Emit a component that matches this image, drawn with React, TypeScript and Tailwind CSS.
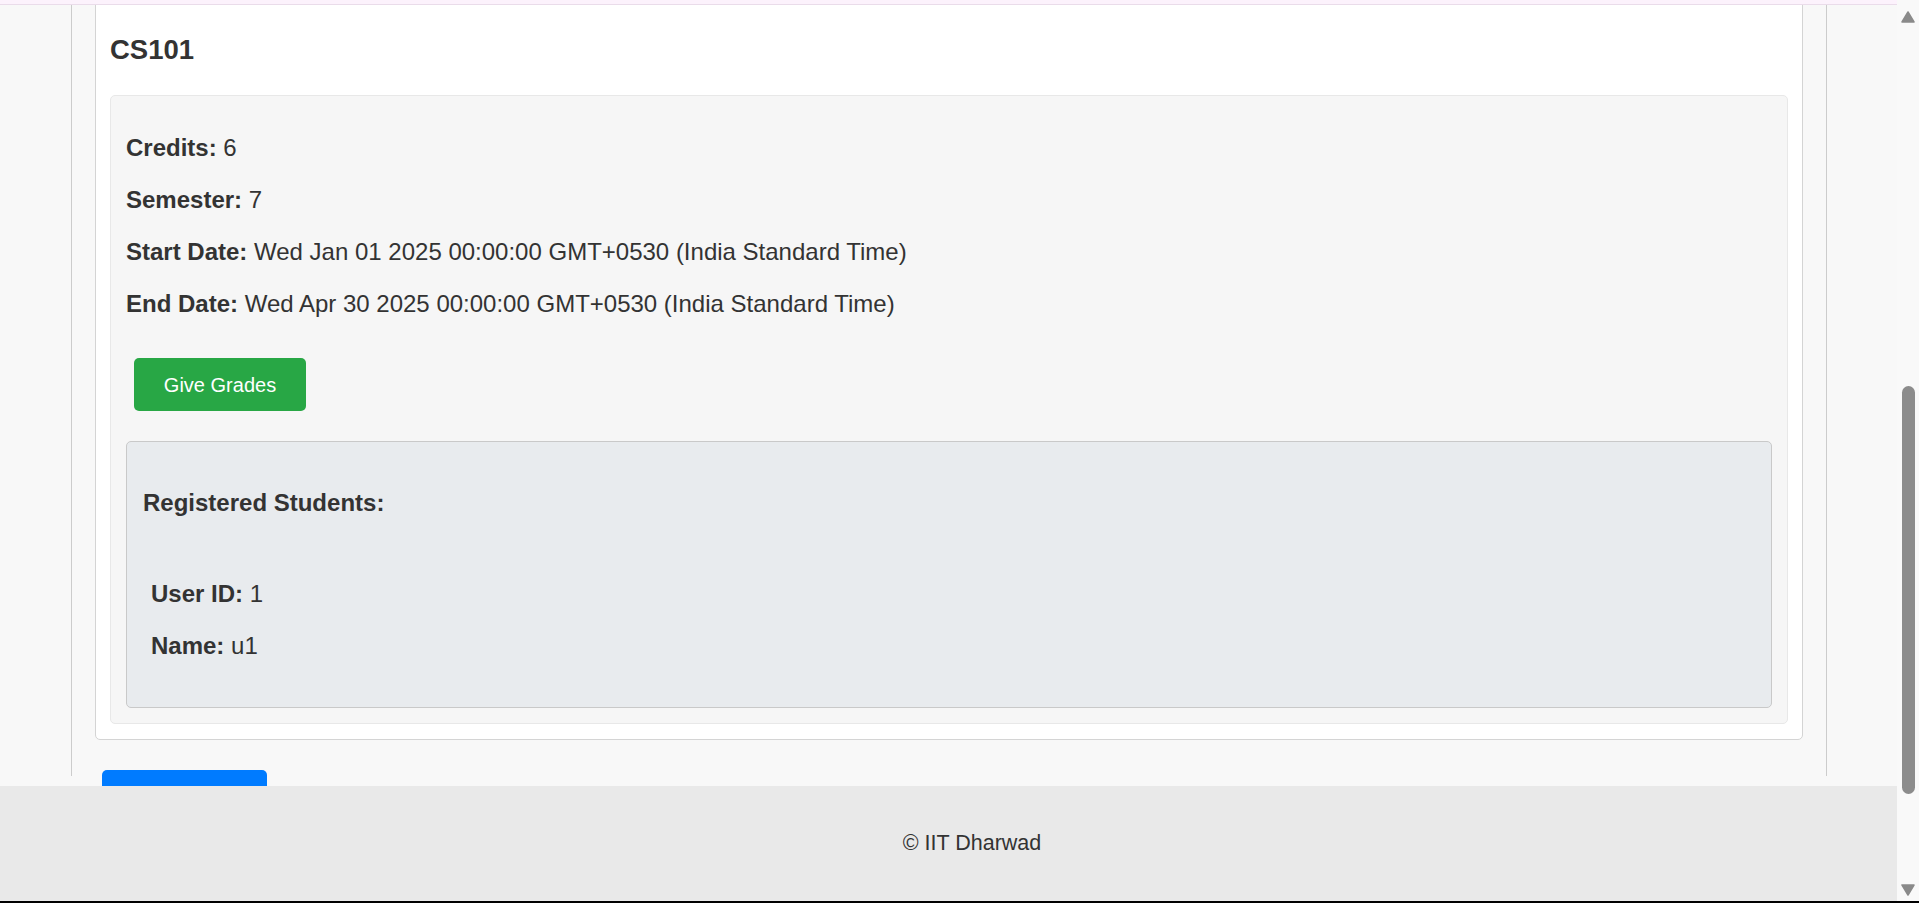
import React from "react";

const CourseCard = () => {
  return (
    <div className="-mt-[10px] rounded-[5px] border border-[#d4d4d4] bg-white px-[14px] pt-[14px] pb-[15px]">
      <h2 className="mt-[24px] mb-[29px] text-[27.5px] leading-[32px] font-bold">CS101</h2>

      {/* Course details */}
      <div className="rounded-[5px] border border-[#e8e8e8] bg-[#f6f6f6] px-[15px] pt-[36px] pb-[15px]">
        <div className="flex flex-col gap-[20px] text-[24px] leading-[32px]">
          <p>
            <strong>Credits:</strong> 6
          </p>
          <p>
            <strong>Semester:</strong> 7
          </p>
          <p>
            <strong>Start Date:</strong> Wed Jan 01 2025 00:00:00 GMT+0530 (India Standard Time)
          </p>
          <p>
            <strong>End Date:</strong> Wed Apr 30 2025 00:00:00 GMT+0530 (India Standard Time)
          </p>
        </div>

        <button className="mt-[38px] ml-[8px] flex h-[53px] w-[172px] items-center justify-center rounded-[5px] bg-[#28a745] text-[20px] text-white">
          Give Grades
        </button>

        {/* Registered students */}
        <div className="mt-[30px] rounded-[5px] border border-[#c9c9c9] bg-[#e8ebee] px-[16px] pt-[45px] pb-[45px]">
          <h3 className="text-[24px] leading-[32px] font-bold">Registered Students:</h3>
          <div className="mt-[59px] ml-[8px] flex flex-col gap-[20px] text-[24px] leading-[32px]">
            <p>
              <strong>User ID:</strong> 1
            </p>
            <p>
              <strong>Name:</strong> u1
            </p>
          </div>
        </div>
      </div>
    </div>
  );
};

const Scrollbar = () => {
  return (
    <div className="flex w-[22px] flex-col items-center bg-[#f9f9f9]">
      <svg width="14" height="12" viewBox="0 0 14 12" className="mt-[11px]">
        <path d="M7 1 L13 11 L1 11 Z" fill="#8a8a8a" strokeLinejoin="round" stroke="#8a8a8a" strokeWidth="1.5" />
      </svg>
      <div className="mt-[363px] h-[408px] w-[13px] rounded-full bg-[#8c8c8c]" />
      <div className="flex-1" />
      <svg width="14" height="12" viewBox="0 0 14 12" className="mb-[5px]">
        <path d="M1 1 L13 1 L7 11 Z" fill="#8a8a8a" strokeLinejoin="round" stroke="#8a8a8a" strokeWidth="1.5" />
      </svg>
    </div>
  );
};

export default function App() {
  return (
    <div
      className="flex h-[903px] w-[1919px] flex-col overflow-hidden text-[#333]"
      style={{ fontFamily: '"Liberation Sans", Arial, sans-serif' }}
    >
      <div className="flex min-h-0 flex-1">
        <div className="flex min-w-0 flex-1 flex-col">
          {/* Top edge of header */}
          <div className="h-[5px] border-b border-[#eadcea] bg-[#fcf2fc]" />

          <main className="min-h-0 flex-1 overflow-hidden bg-[#f8f8f8] pl-[71px] pr-[70px]">
            <div className="h-full border-x border-[#cccccc] px-[23px]">
              <CourseCard />
              <button className="mt-[30px] ml-[7px] h-[53px] w-[165px] rounded-[5px] bg-[#007bff]" />
            </div>
          </main>

          <footer className="flex h-[115px] items-center justify-center bg-[#e9e9e9] pl-[47px] text-[21.5px]">
            © IIT Dharwad
          </footer>
        </div>
        <Scrollbar />
      </div>
      <div className="h-[2px] bg-black" />
    </div>
  );
}
